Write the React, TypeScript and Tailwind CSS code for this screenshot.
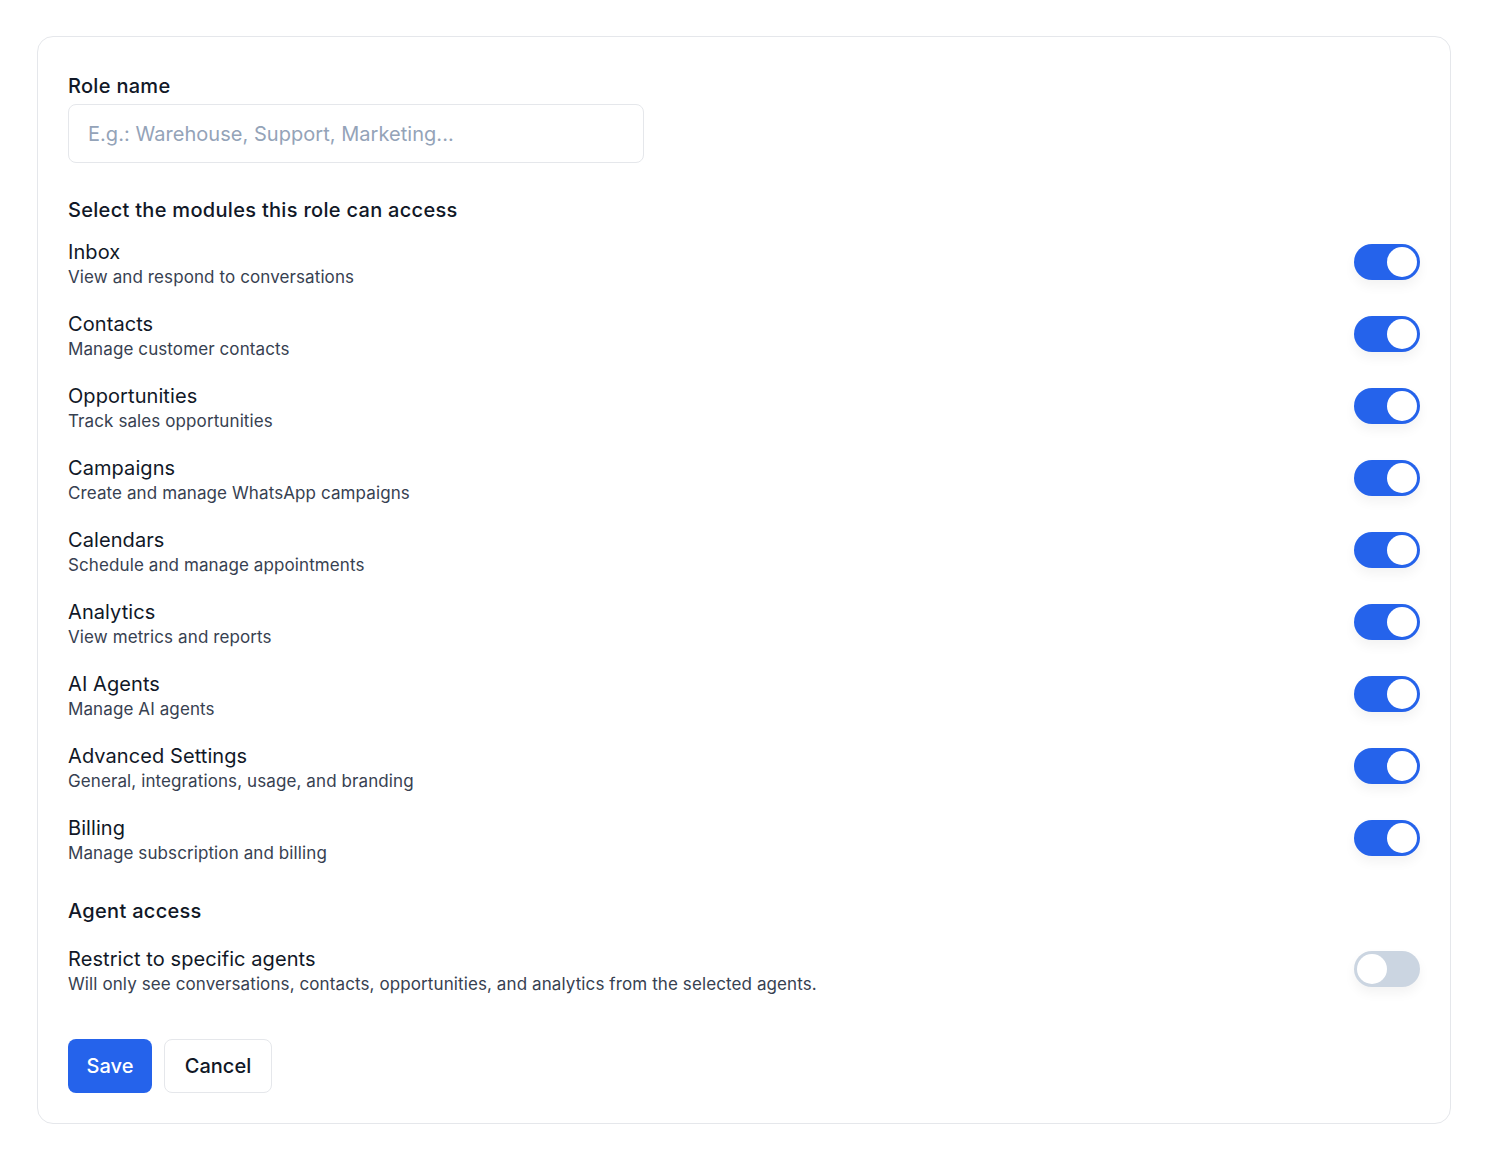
import React, { useState } from "react";

const modules = [
  { title: "Inbox", desc: "View and respond to conversations" },
  { title: "Contacts", desc: "Manage customer contacts" },
  { title: "Opportunities", desc: "Track sales opportunities" },
  { title: "Campaigns", desc: "Create and manage WhatsApp campaigns" },
  { title: "Calendars", desc: "Schedule and manage appointments" },
  { title: "Analytics", desc: "View metrics and reports" },
  { title: "AI Agents", desc: "Manage AI agents" },
  { title: "Advanced Settings", desc: "General, integrations, usage, and branding" },
  { title: "Billing", desc: "Manage subscription and billing" },
];

function Toggle({ on, onChange }: { on: boolean; onChange: () => void }) {
  return (
    <button
      type="button"
      onClick={onChange}
      className={`relative mt-[5px] flex h-[36px] w-[66px] shrink-0 items-center rounded-full p-[3px] shadow-[0_6px_12px_rgba(0,0,0,0.05)] ${
        on ? "justify-end bg-[#2563eb]" : "justify-start bg-[#cbd5e1]"
      }`}
    >
      <span className="block h-[30px] w-[30px] rounded-full bg-white" />
    </button>
  );
}

function Row({
  title,
  desc,
  on,
  onChange,
}: {
  title: string;
  desc: string;
  on: boolean;
  onChange: () => void;
}) {
  return (
    <div className="flex items-start justify-between">
      <div className="flex flex-col">
        <span className="text-[20px] leading-[26px] tracking-[0.004em] text-[#111827]">{title}</span>
        <span className="text-[17px] leading-[24px] tracking-[0.006em] text-[#374151]">{desc}</span>
      </div>
      <Toggle on={on} onChange={onChange} />
    </div>
  );
}

export default function App() {
  const [enabled, setEnabled] = useState<boolean[]>(modules.map(() => true));
  const [restrict, setRestrict] = useState(false);

  return (
    <div
      className="min-h-[1161px] bg-white px-[37px] pt-[36px]"
      style={{ fontFamily: "Inter, 'Noto Sans', sans-serif" }}
    >
      <div className="rounded-[16px] border border-[#e5e7eb] px-[30px] pb-[30px] pt-[36px]">
        <div className="text-[20px] font-medium leading-[26px] tracking-[0.015em] text-[#111827]">Role name</div>
        <input
          className="mt-[5px] h-[59px] w-[576px] rounded-[8px] border border-[#e5e7eb] px-[19px] text-[20px] tracking-[0.002em] text-[#111827] placeholder:text-[#94a3b8] outline-none"
          placeholder="E.g.: Warehouse, Support, Marketing..."
        />

        <div className="mt-[33px] text-[20px] font-medium leading-[28px] tracking-[0.015em] text-[#111827]">
          Select the modules this role can access
        </div>
        <div className="mt-[15px] flex flex-col gap-[22px]">
          {modules.map((m, i) => (
            <Row
              key={m.title}
              title={m.title}
              desc={m.desc}
              on={enabled[i]}
              onChange={() =>
                setEnabled((prev) => prev.map((v, j) => (j === i ? !v : v)))
              }
            />
          ))}
        </div>

        <div className="mt-[32px] text-[20px] font-medium leading-[28px] tracking-[0.015em] text-[#111827]">
          Agent access
        </div>
        <div className="mt-[21px]">
          <Row
            title="Restrict to specific agents"
            desc="Will only see conversations, contacts, opportunities, and analytics from the selected agents."
            on={restrict}
            onChange={() => setRestrict((v) => !v)}
          />
        </div>

        <div className="mt-[43px] flex gap-[12px]">
          <button className="h-[54px] w-[84px] rounded-[8px] bg-[#2563eb] text-[20px] font-medium text-white">
            Save
          </button>
          <button className="h-[54px] w-[108px] rounded-[8px] border border-[#e5e7eb] bg-white text-[20px] font-medium text-[#111827]">
            Cancel
          </button>
        </div>
      </div>
    </div>
  );
}
